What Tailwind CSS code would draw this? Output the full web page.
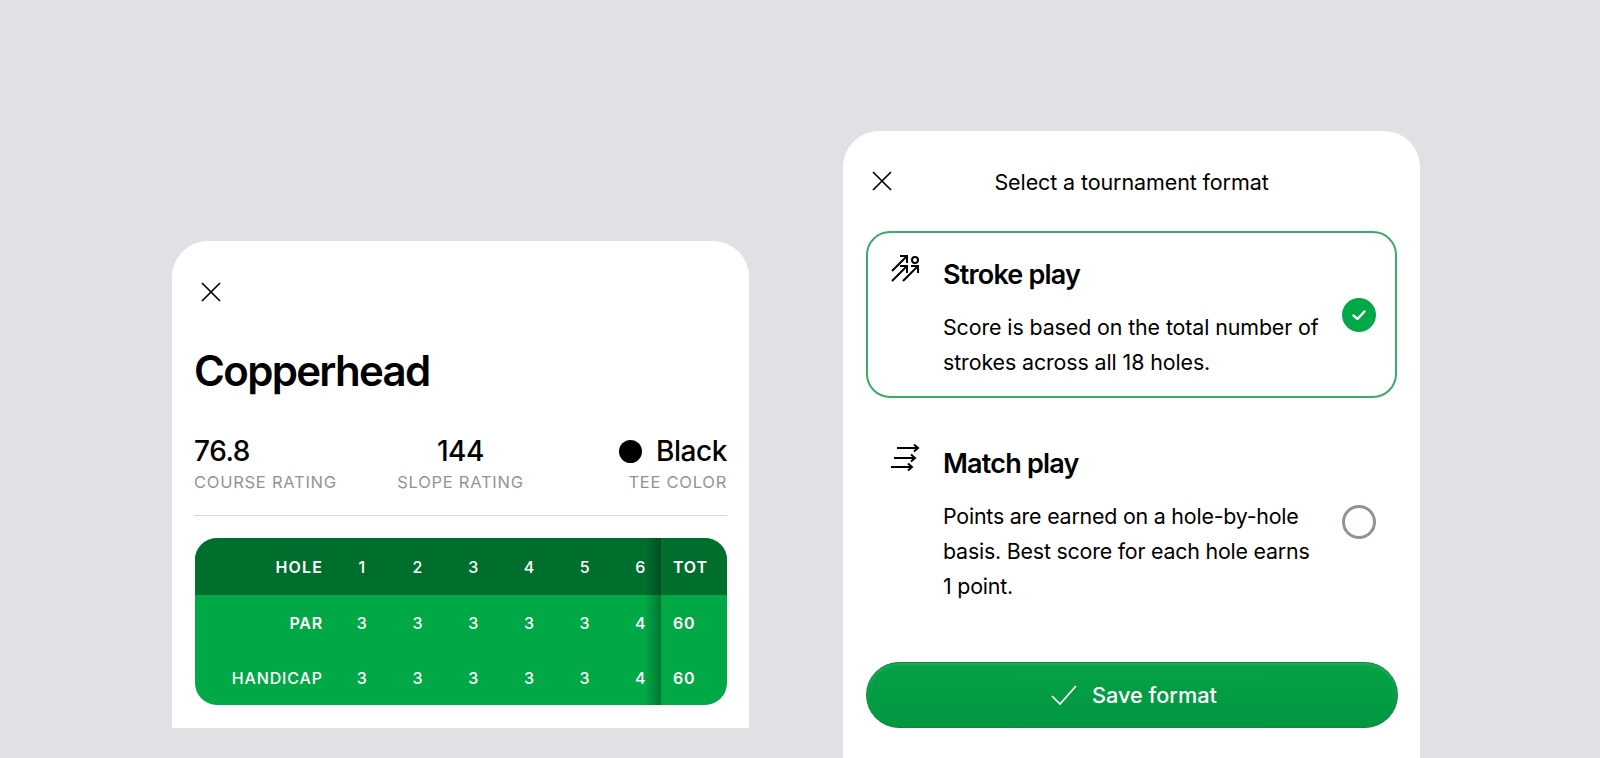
<!doctype html>
<html><head><meta charset="utf-8">
<script src="https://cdn.jsdelivr.net/npm/@tailwindcss/browser@4"></script>
</head>
<body class="m-0">
<div class="h-[758px] w-[1600px] overflow-hidden bg-[#dfe1e5] flex items-start pl-[172px] gap-[94px] font-['Inter',sans-serif] text-black">

  <section class="mt-[241px] w-[577px] h-[487px] bg-white rounded-t-[36px] px-[22px] pt-[38px]">
    <svg class="ml-[4px] block" width="26" height="26" viewBox="0 0 26 26" fill="none" stroke="#000" stroke-width="1.7"><path d="M4 4 22 22M22 4 4 22"/></svg>
    <h1 class="mt-[41px] text-[42px] leading-[50px] font-semibold tracking-[-0.04em]">Copperhead</h1>
    <div class="mt-[39px] grid grid-cols-3 border-b-[1.5px] border-[#d5d9d9] h-[81px]">
      <div class="whitespace-nowrap">
        <div class="text-[28px] leading-[32px] font-medium tracking-[-0.015em]">76.8</div>
        <div class="mt-[3px] text-[16.5px] leading-[24px] tracking-[0.045em] text-[#8f949c]">COURSE RATING</div>
      </div>
      <div class="text-center whitespace-nowrap">
        <div class="text-[28px] leading-[32px] font-medium tracking-[-0.015em]">144</div>
        <div class="mt-[3px] text-[16.5px] leading-[24px] tracking-[0.045em] text-[#8f949c]">SLOPE RATING</div>
      </div>
      <div class="text-right whitespace-nowrap">
        <div class="flex items-center justify-end gap-[14px] text-[28px] leading-[32px] font-medium tracking-[-0.015em]"><span class="w-[23px] h-[23px] rounded-full bg-black"></span>Black</div>
        <div class="mt-[3px] text-[16.5px] leading-[24px] tracking-[0.045em] text-[#8f949c]">TEE COLOR</div>
      </div>
    </div>
    <div class="mt-[22px] ml-[1px] w-[532px] h-[167px] rounded-[22px] overflow-hidden bg-[#00a846] flex text-white text-[16px] font-medium">
      <div class="relative w-[466px] overflow-hidden">
        <div class="flex h-[57px] items-center bg-[#006f2e]">
          <div class="w-[128px] shrink-0 text-right font-semibold tracking-[0.07em] mr-[11px]">HOLE</div>
          <div class="w-[55.7px] shrink-0 text-center">1</div><div class="w-[55.7px] shrink-0 text-center">2</div><div class="w-[55.7px] shrink-0 text-center">3</div><div class="w-[55.7px] shrink-0 text-center">4</div><div class="w-[55.7px] shrink-0 text-center">5</div><div class="w-[55.7px] shrink-0 text-center">6</div>
        </div>
        <div class="flex h-[55px] items-center">
          <div class="w-[128px] shrink-0 text-right font-semibold tracking-[0.05em] mr-[11px]">PAR</div>
          <div class="w-[55.7px] shrink-0 text-center">3</div><div class="w-[55.7px] shrink-0 text-center">3</div><div class="w-[55.7px] shrink-0 text-center">3</div><div class="w-[55.7px] shrink-0 text-center">3</div><div class="w-[55.7px] shrink-0 text-center">3</div><div class="w-[55.7px] shrink-0 text-center">4</div>
        </div>
        <div class="flex h-[55px] items-center">
          <div class="w-[128px] shrink-0 text-right font-medium tracking-[0.055em] mr-[11px]">HANDICAP</div>
          <div class="w-[55.7px] shrink-0 text-center">3</div><div class="w-[55.7px] shrink-0 text-center">3</div><div class="w-[55.7px] shrink-0 text-center">3</div><div class="w-[55.7px] shrink-0 text-center">3</div><div class="w-[55.7px] shrink-0 text-center">3</div><div class="w-[55.7px] shrink-0 text-center">4</div>
        </div>
        <div class="absolute right-0 top-0 bottom-0 w-[16px] bg-gradient-to-r from-black/0 to-black/30"></div>
      </div>
      <div class="w-[66px] pl-[12px] font-semibold tracking-[0.05em]">
        <div class="h-[57px] flex items-center bg-[#006f2e] -ml-[12px] pl-[12px]">TOT</div>
        <div class="h-[55px] flex items-center">60</div>
        <div class="h-[55px] flex items-center">60</div>
      </div>
    </div>
  </section>

  <section class="mt-[131px] w-[577px] h-[627px] bg-white rounded-t-[36px] px-[23px]">
    <div class="relative h-[100px] flex items-center justify-center pt-[1px]">
      <svg class="absolute left-[3px] top-[37px]" width="26" height="26" viewBox="0 0 26 26" fill="none" stroke="#000" stroke-width="1.7"><path d="M4 4 22 22M22 4 4 22"/></svg>
      <div class="text-[21.5px] leading-[28px] tracking-[-0.005em]">Select a tournament format</div>
    </div>
    <div class="flex h-[167px] rounded-[24px] border-[2px] border-[#3aab69] pl-[21px] pr-[19px] pt-[25px]">
      <svg class="shrink-0 -mt-[5px]" width="34" height="34" viewBox="0 0 34 34" fill="none" stroke="#000" stroke-width="2"><path d="M3 18 18 3M11 3h7v7M3 28 18 13M11 13h7v7M14 28 29 13M22 13h7v7"/><circle cx="26" cy="7" r="3"/></svg>
      <div class="ml-[20px] w-[380px] shrink-0">
        <div class="text-[27px] leading-[34px] font-semibold tracking-[-0.03em]">Stroke play</div>
        <p class="mt-[18px] text-[21.4px] leading-[35px] tracking-[-0.005em]">Score is based on the total number of strokes across all 18 holes.</p>
      </div>
      <div class="ml-auto mt-[40px] w-[34px] h-[34px] rounded-full bg-[#00a846] flex items-center justify-center shrink-0">
        <svg width="18" height="18" viewBox="0 0 18 18" fill="none" stroke="#fff" stroke-width="2.4" stroke-linecap="round" stroke-linejoin="round"><path d="M3.5 9.5 7.5 13 14.5 5.5"/></svg>
      </div>
    </div>
    <div class="flex h-[264px] pl-[23px] pr-[21px] pt-[49px]">
      <svg class="shrink-0 -mt-[3px]" width="34" height="34" viewBox="0 0 34 34" fill="none" stroke="#000" stroke-width="2"><path d="M8 4H29M25 0.5 29 4 25 7.5M5 14H26M22 10.5 26 14 22 17.5M2 23H23M19 19.5 23 23 19 26.5"/></svg>
      <div class="ml-[20px] w-[380px] shrink-0">
        <div class="text-[27px] leading-[34px] font-semibold tracking-[-0.03em]">Match play</div>
        <p class="mt-[18px] text-[21.4px] leading-[35px] tracking-[-0.01em]">Points are earned on a hole-by-hole<br>basis. Best score for each hole earns<br>1 point.</p>
      </div>
      <div class="ml-auto mt-[58px] w-[34px] h-[34px] rounded-full border-[3.5px] border-[#8f949c] shrink-0"></div>
    </div>
    <button class="w-[532px] h-[66px] rounded-full border border-[#0f8540] bg-gradient-to-b from-[#06a247] to-[#009740] shadow-[inset_0_2px_3px_rgba(255,255,255,0.1)] flex items-center justify-center gap-[13px] text-white text-[21.7px] font-medium">
      <svg class="ml-[2px]" width="30" height="30" viewBox="0 0 30 30" fill="none" stroke="#fff" stroke-width="1.7"><path d="M3 16 11 24 27 6"/></svg>
      Save format
    </button>
  </section>
</div>
</body></html>
